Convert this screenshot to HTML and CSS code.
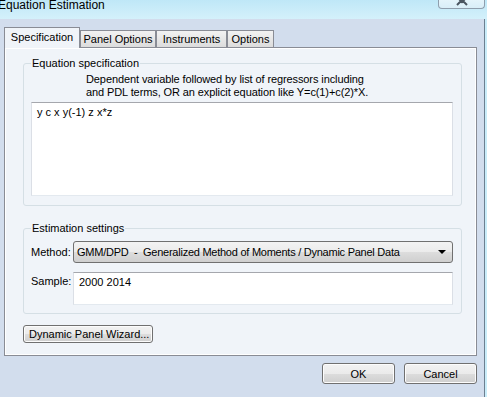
FILE: index.html
```html
<!DOCTYPE html>
<html lang="en">

<head>
    <meta charset="UTF-8">
    <title>Equation Estimation</title>
    <link rel="stylesheet" href="styles.css">
</head>

<body>
    <div class="titlebar">
        <span class="title">Equation Estimation</span>
        <span class="close-btn">
            <svg width="12" height="6" viewBox="0 0 12 6">
                <path d="M1 -3 L6 2 L11 -3 M1 5 L6 0 L11 5" stroke="#4a5560" stroke-width="2" fill="none" />
            </svg>
        </span>
    </div>

    <div class="frame">
        <div class="client">
            <div class="tabs">
                <div class="tab active" style="width: 76px">Specification</div>
                <div class="tab" style="width: 76px">Panel Options</div>
                <div class="tab" style="width: 71px">Instruments</div>
                <div class="tab" style="width: 47px">Options</div>
            </div>

            <div class="panel">
                <fieldset class="group">
                    <legend>Equation specification</legend>
                    <p class="hint">Dependent variable followed by list of regressors including<br>and PDL terms, OR an explicit equation like Y=c(1)+c(2)*X.</p>
                    <div class="textbox spec-box">y c x y(-1) z x*z</div>
                </fieldset>

                <fieldset class="group settings">
                    <legend>Estimation settings</legend>
                    <div class="form-grid">
                        <label class="row-label">Method:</label>
                        <div class="select">
                            <span class="select-text">GMM/DPD  -  Generalized Method of Moments / Dynamic Panel Data</span>
                            <span class="arrow"></span>
                        </div>
                        <label class="row-label sample-label">Sample:</label>
                        <div class="textbox sample-box">2000 2014</div>
                    </div>
                </fieldset>

                <button class="btn wizard">Dynamic Panel Wizard...</button>
            </div>

            <div class="footer">
                <button class="btn dlg">OK</button>
                <button class="btn dlg">Cancel</button>
            </div>
        </div>
    </div>
</body>

</html>
```

FILE: styles.css
```css
body {
    margin: 0;
    width: 487px;
    height: 397px;
    overflow: hidden;
    background-color: #c9ecf9;
    font-family: "Liberation Sans", Arial, sans-serif;
    font-size: 11px;
    color: #000;
}

.titlebar {
    height: 19px;
    display: flex;
    justify-content: space-between;
    align-items: flex-start;
    background: linear-gradient(#bfe7f7, #d4f1fb);
}

.title {
    font-size: 12px;
    line-height: 12px;
    margin-top: -1px;
    margin-left: -2px;
}

.close-btn {
    width: 45px;
    height: 8px;
    margin-right: 2px;
    border: 1px solid #8f9ead;
    border-top: none;
    border-radius: 0 0 4px 4px;
    background: linear-gradient(#e4f4fb, #d9eef8);
    display: flex;
    justify-content: center;
    align-items: flex-start;
}

.frame {
    display: flex;
}

.client {
    width: 484px;
    height: 373px;
    background-color: #d2dded;
    border-right: 1px solid #6d7f90;
    border-bottom: 1px solid #6d7f90;
    padding-top: 8px;
    box-sizing: content-box;
}

.tabs {
    display: flex;
    align-items: flex-end;
    height: 20px;
    margin-left: 4px;
}

.tab {
    box-sizing: border-box;
    height: 17px;
    border: 1px solid #898c95;
    border-bottom: none;
    background: linear-gradient(#f2f2f2, #dcdcdc);
    text-align: center;
    line-height: 16px;
    white-space: nowrap;
}

.tab.active {
    height: 21px;
    margin-bottom: -1px;
    background: #f0f4f9;
    position: relative;
    z-index: 1;
    line-height: 19px;
}

.panel {
    box-sizing: border-box;
    width: 473px;
    height: 309px;
    margin-left: 4px;
    border: 1px solid #898c95;
    box-shadow: inset 0 0 0 1px #fff;
    background-color: #f0f4f9;
    padding: 9px 0 0 18px;
}

.group {
    box-sizing: border-box;
    width: 439px;
    margin: 0;
    padding: 3px 8px 9px 7px;
    border: 1px solid #d5dfe5;
    border-radius: 3px;
}

.group legend {
    padding: 0 1px;
    line-height: 13px;
}

.hint {
    margin: 0 0 3px 55px;
    line-height: 13px;
    letter-spacing: -0.1px;
}

.textbox {
    box-sizing: border-box;
    background: #fff;
    border: 1px solid #dbdfe6;
    border-top-color: #a5a7ad;
    border-bottom-color: #e3e9ef;
    padding: 3px 5px;
    line-height: 13px;
}

.spec-box {
    height: 94px;
}

.settings {
    margin-top: 16px;
    padding-top: 6px;
    padding-bottom: 8px;
}

.form-grid {
    display: grid;
    grid-template-columns: 42px 1fr;
    row-gap: 9px;
}

.row-label {
    line-height: 22px;
}

.sample-label {
    line-height: 13px;
    padding-top: 3px;
}

.select {
    box-sizing: border-box;
    height: 22px;
    border: 1px solid #707070;
    border-radius: 3px;
    background: linear-gradient(#f3f3f3 0%, #ebebeb 50%, #dddddd 51%, #cfcfcf 100%);
    display: flex;
    align-items: center;
    justify-content: space-between;
    padding: 0 6px 0 3px;
}

.select-text {
    white-space: pre;
    letter-spacing: -0.25px;
}

.arrow {
    width: 0;
    height: 0;
    border-left: 4px solid transparent;
    border-right: 4px solid transparent;
    border-top: 4px solid #000;
}

.sample-box {
    height: 33px;
    padding-left: 5px;
}

.btn {
    font-family: "Liberation Sans", Arial, sans-serif;
    font-size: 11px;
    color: #000;
    box-sizing: border-box;
    border: 1px solid #707070;
    border-radius: 3px;
    background: linear-gradient(#f2f2f2 0%, #ebebeb 50%, #dddddd 51%, #cfcfcf 100%);
    box-shadow: inset 0 0 0 1px #fcfcfc;
    padding: 0;
    margin: 0;
}

.wizard {
    display: block;
    margin-top: 11px;
    width: 130px;
    height: 18px;
    text-align: left;
    padding-left: 5px;
}

.footer {
    display: flex;
    justify-content: flex-end;
    gap: 9px;
    width: 477px;
    margin-top: 7px;
}

.dlg {
    width: 73px;
    height: 21px;
}
```
